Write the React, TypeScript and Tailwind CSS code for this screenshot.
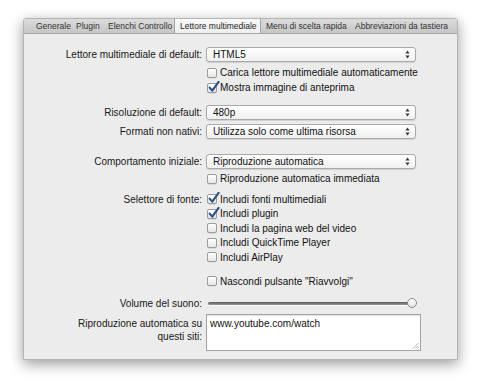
import React from 'react';

const font = { fontFamily: '"Liberation Sans", Arial, sans-serif' };

function Check({ checked }: { checked?: boolean }) {
  return (
    <span className="relative ml-[1px] mr-[3px] inline-block h-[10px] w-[10px] shrink-0 rounded-[2px] border border-[#9c9c9c] bg-gradient-to-b from-[#ffffff] to-[#e6e6e6] shadow-[0_0.5px_0.5px_rgba(0,0,0,0.15)]">
      {checked && (
        <svg className="absolute left-[0px] top-[-3px]" width="12" height="12" viewBox="0 0 12 12">
          <path d="M1.6 6.6 L4.3 9.6 L10.6 0.8" fill="none" stroke="#2c4f86" strokeWidth="2.1" strokeLinecap="round" strokeLinejoin="round" />
        </svg>
      )}
    </span>
  );
}

function Popup({ value }: { value: string }) {
  return (
    <div className="flex h-[15px] w-[210px] items-center justify-between rounded-[3px] border border-[#a9a9a9] bg-gradient-to-b from-[#ffffff] to-[#f0f0f0] pl-[6px] pr-[5px] text-[10px] text-[#111] shadow-[0_1px_1px_rgba(0,0,0,0.12)]">
      <span>{value}</span>
      <svg width="5" height="9" viewBox="0 0 5 9">
        <path d="M2.5 0.5 L4.6 3.4 L0.4 3.4 Z" fill="#3a3a3a" />
        <path d="M2.5 8.5 L4.6 5.6 L0.4 5.6 Z" fill="#3a3a3a" />
      </svg>
    </div>
  );
}

function Row({ label, children, h = 'h-[15px]', mt }: { label?: string; children: React.ReactNode; h?: string; mt: string }) {
  return (
    <div className={`flex items-center ${h} ${mt}`}>
      <div className="w-[178px] shrink-0 text-right text-[10px] text-[#181818]">{label}</div>
      <div className="ml-[4px] flex items-center text-[10px] text-[#111]">{children}</div>
    </div>
  );
}

function CheckRow({ label, text, checked, mt, h = 'h-[15px]' }: { label?: string; text: string; checked?: boolean; mt: string; h?: string }) {
  return (
    <Row label={label} mt={mt} h={h}>
      <Check checked={checked} />
      <span>{text}</span>
    </Row>
  );
}

const tabs = [
  { name: 'Generale', cls: 'w-[48px] pl-[12px]' },
  { name: 'Plugin', cls: 'w-[29px] pl-[4px]' },
  { name: 'Elenchi Controllo', cls: 'w-[73px] pl-[7px]' },
];

export default function App() {
  return (
    <div className="h-[389px] w-[483px] bg-white pl-[23px] pt-[18px]" style={font}>
      <div className="h-[342px] w-[435px] rounded-t-[3px] border border-[#b4b4b4] bg-[#ececec] shadow-[0_4px_14px_rgba(0,0,0,0.4)]">
        <div className="flex h-[15px] items-stretch border-b border-[#a8a8a8] bg-gradient-to-b from-[#dcdcdc] to-[#c6c6c6] text-[8.5px] leading-[15px] text-[#333]">
          {tabs.map((t) => (
            <div key={t.name} className={`${t.cls} shrink-0 whitespace-nowrap`}>{t.name}</div>
          ))}
          <div className="w-[87px] shrink-0 whitespace-nowrap border-x border-[#a4a4a4] bg-gradient-to-b from-[#f8f8f8] to-[#efefef] pl-[5px] text-[#222]">Lettore multimediale</div>
          <div className="w-[90px] shrink-0 whitespace-nowrap pl-[5px]">Menu di scelta rapida</div>
          <div className="flex-1 whitespace-nowrap pl-[4px]">Abbreviazioni da tastiera</div>
        </div>

        <Row label="Lettore multimediale di default:" h="h-[16px]" mt="mt-[12px]">
          <Popup value="HTML5" />
        </Row>
        <CheckRow text="Carica lettore multimediale automaticamente" mt="mt-[3px]" />
        <CheckRow text="Mostra immagine di anteprima" checked mt="mt-0" />

        <Row label="Risoluzione di default:" h="h-[16px]" mt="mt-[9px]">
          <Popup value="480p" />
        </Row>
        <Row label="Formati non nativi:" h="h-[16px]" mt="mt-[3px]">
          <Popup value="Utilizza solo come ultima risorsa" />
        </Row>

        <Row label="Comportamento iniziale:" h="h-[16px]" mt="mt-[14px]">
          <Popup value="Riproduzione automatica" />
        </Row>
        <CheckRow text="Riproduzione automatica immediata" mt="mt-[2px]" />

        <CheckRow label="Selettore di fonte:" text="Includi fonti multimediali" checked mt="mt-[6px]" h="h-[14.5px]" />
        <CheckRow text="Includi plugin" checked mt="mt-0" h="h-[14.5px]" />
        <CheckRow text="Includi la pagina web del video" mt="mt-0" h="h-[14.5px]" />
        <CheckRow text="Includi QuickTime Player" mt="mt-0" h="h-[14.5px]" />
        <CheckRow text="Includi AirPlay" mt="mt-0" h="h-[14.5px]" />

        <CheckRow text={'Nascondi pulsante "Riavvolgi"'} mt="mt-[9px]" />

        <Row label="Volume del suono:" mt="mt-[7px]">
          <div className="relative flex h-[12px] w-[211px] items-center">
            <div className="ml-[2px] h-[3px] w-[201px] rounded-full bg-gradient-to-b from-[#5a5a5a] to-[#9a9a9a] shadow-[0_1px_0_rgba(255,255,255,0.8)]" />
            <div className="absolute right-0 top-[1px] h-[10px] w-[10px] rounded-full border border-[#8a8a8a] bg-gradient-to-b from-[#ffffff] to-[#e2e2e2]" />
          </div>
        </Row>

        <div className="mt-[3px] flex">
          <div className="w-[178px] shrink-0 pt-[3px] text-right text-[10px] leading-[13px] text-[#181818]">
            Riproduzione automatica su
            <br />
            questi siti:
          </div>
          <div className="relative ml-[4px] h-[37px] w-[215px] border border-[#a3a3a3] bg-white pl-[3px] pt-[2px] text-[10px] leading-[13px] text-[#111] shadow-[inset_0_1px_1px_rgba(0,0,0,0.12)]">
            www.youtube.com/watch
            <svg className="absolute bottom-[1px] right-[1px]" width="7" height="7" viewBox="0 0 7 7">
              <path d="M6.5 1 L1 6.5 M6.5 3.5 L3.5 6.5 M6.5 5.5 L5.5 6.5" stroke="#a0a0a0" strokeWidth="0.8" />
            </svg>
          </div>
        </div>
      </div>
    </div>
  );
}
